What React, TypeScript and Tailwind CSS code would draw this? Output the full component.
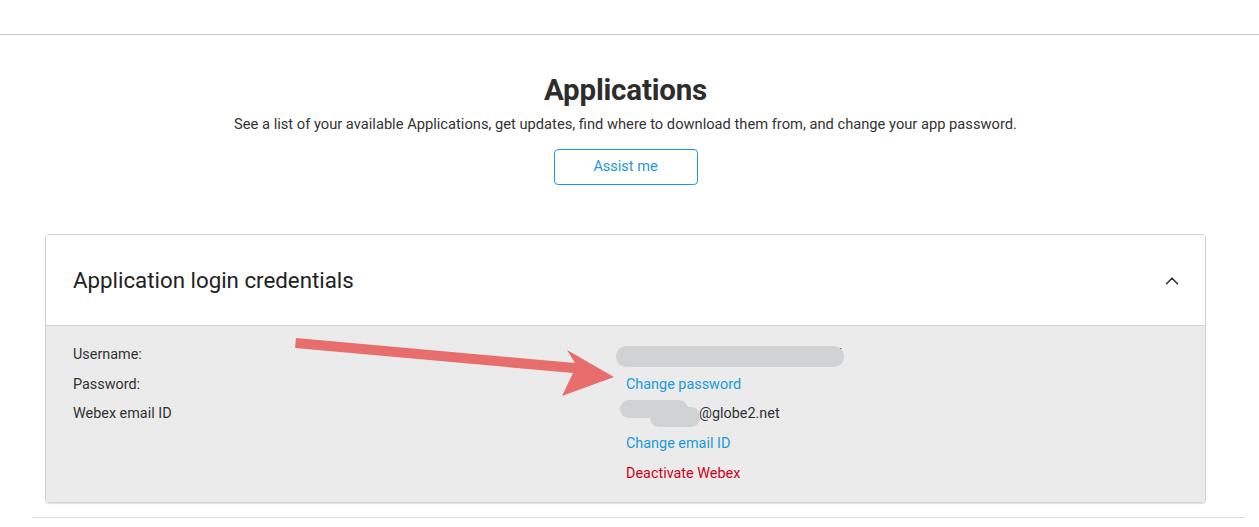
import { ChevronUp } from 'lucide-react';

const rows = [
  { label: 'Username:' },
  { label: 'Password:' },
  { label: 'Webex email ID' },
];

export default function App() {
  return (
    <div className="relative min-h-[527px] w-[1259px] bg-white text-[#333] font-['Roboto',sans-serif]">
      <div className="h-[35px] border-b border-[#c8c8c8]" />

      <div className="w-[1251px] flex flex-col items-center pt-[38px]">
        <h1 className="text-[29.5px] leading-[34px] font-bold text-[#2d2d2d] tracking-[-0.2px]">Applications</h1>
        <p className="mt-[7px] text-[14.7px] leading-[20px] text-[#333]">
          See a list of your available Applications, get updates, find where to download them from, and change your app password.
        </p>
        <button className="mt-[15px] w-[144px] h-[36px] rounded-[4px] border border-[#1a9ad6] text-[14.5px] text-[#1a9ad6]">
          Assist me
        </button>
      </div>

      <div className="ml-[45px] mt-[49px] w-[1161px] rounded-[4px] border border-[#d2d2d2] shadow-[0_1px_1px_rgba(0,0,0,0.12)] overflow-hidden">
        <div className="h-[91px] flex items-center justify-between pl-[27px] pr-[22px] pt-[2px] border-b border-[#d2d2d2] bg-white">
          <h2 className="text-[22.3px] text-[#222] font-normal">Application login credentials</h2>
          <ChevronUp size={22} strokeWidth={1.8} className="text-[#333]" />
        </div>
        <div className="bg-[#ebebeb] h-[176px] pl-[27px] pt-[14px] flex text-[14.4px] leading-[29.5px]">
          <div className="w-[553px] flex flex-col">
            {rows.map((r) => (
              <span key={r.label}>{r.label}</span>
            ))}
          </div>
          <div className="flex flex-col">
            <span className="relative text-[#333]">
              <span className="inline-block w-[218px] text-right pr-[2px]">d</span>
              <span className="absolute left-[-10px] top-[6px] w-[228px] h-[21px] rounded-[10px] bg-[#d1d2d4]" />
            </span>
            <a className="text-[#1a9ad6]">Change password</a>
            <span className="relative">
              <span className="pl-[73px]">@globe2.net</span>
              <span className="absolute left-[-6px] top-[1px] w-[68px] h-[18px] rounded-[9px] bg-[#d1d2d4]" />
              <span className="absolute left-[24px] top-[8px] w-[50px] h-[20px] rounded-[9px] bg-[#d1d2d4]" />
            </span>
            <a className="text-[#1a9ad6]">Change email ID</a>
            <a className="text-[#d0021b] mt-[1px]">Deactivate Webex</a>
          </div>
        </div>
      </div>

      <div className="ml-[32px] mt-[14px] w-[1213px] border-b border-[#dcdcdc]" />

      <svg className="absolute left-0 top-0 pointer-events-none" width="1259" height="527">
        <polygon points="296,338 575,363 567,350 614,377 562,396 573,373 295,348" fill="#e86e6e" />
      </svg>
    </div>
  );
}
